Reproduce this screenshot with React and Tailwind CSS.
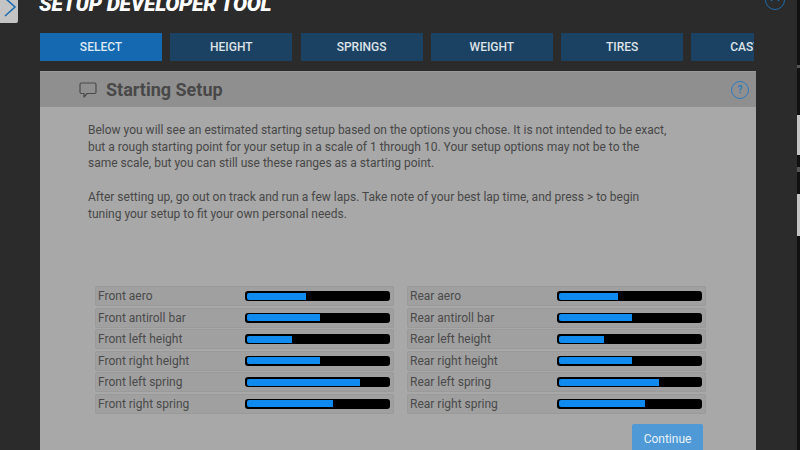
const tabs = ["SELECT", "HEIGHT", "SPRINGS", "WEIGHT", "TIRES", "CASTER"]

const frontRows = [
  ["Front aero", 42],
  ["Front antiroll bar", 52],
  ["Front left height", 32],
  ["Front right height", 52],
  ["Front left spring", 80],
  ["Front right spring", 61],
]

const rearRows = [
  ["Rear aero", 42],
  ["Rear antiroll bar", 52],
  ["Rear left height", 32],
  ["Rear right height", 52],
  ["Rear left spring", 71],
  ["Rear right spring", 61],
]

function SetupRow({ label, value }) {
  return (
    <div className="flex items-center h-[20px] shrink-0 border border-[#9a9a9a] bg-[#a0a0a0] rounded-[2px] pl-[2px] pr-[3px]">
      <span className="w-[147px] text-[12px] leading-none text-[#4a4a4a]">{label}</span>
      <div className="flex-1 h-[10px] bg-black rounded-[3px] p-[1.5px]">
        <div className="h-full bg-[#0f8aee] rounded-l-[2px]" style={{ width: `${value}%` }} />
      </div>
    </div>
  )
}

export default function App() {
  return (
    <div className="w-[800px] h-[450px] overflow-hidden bg-[#2b2b2b] font-['Roboto',sans-serif] flex">
      <div className="w-[797px] shrink-0 flex flex-col">
        <div className="h-[33px] shrink-0 flex items-start">
          <div className="w-[18px] h-[23px] bg-[#c4c4c4] rounded-br-[2px]">
            <svg width="18" height="23" viewBox="0 0 18 23" fill="none" stroke="#1b6cb0" strokeWidth="1.6">
              <path d="M5 -2 L15 7 L5 16" />
            </svg>
          </div>
          <h1 className="ml-[21px] -mt-[8px] text-[21px] leading-[24px] font-black italic tracking-[-0.25px] text-white">
            SETUP DEVELOPER TOOL
          </h1>
          <div className="ml-auto mr-[12px] -mt-[10px] w-[20px] h-[20px] rounded-full border-[1.5px] border-[#1f6cad] flex items-center justify-center">
            <svg width="10" height="10" viewBox="0 0 10 10" fill="none" stroke="#1f6cad" strokeWidth="1.2">
              <path d="M1 6 L5 2 L9 6" />
            </svg>
          </div>
        </div>

        <div className="ml-[40px] w-[714px] h-[28px] flex gap-[8.3px] overflow-hidden shrink-0">
          {tabs.map((tab, i) => (
            <div
              key={tab}
              className={
                i === 0
                  ? "w-[122px] shrink-0 flex items-center justify-center bg-[#1469b0] text-[12px] font-medium text-[#dceaf5]"
                  : "w-[122px] shrink-0 flex items-center justify-center bg-[#1c4263] text-[12px] font-medium text-[#dde3e8]"
              }
            >
              {tab}
            </div>
          ))}
        </div>

        <div className="ml-[40px] mt-[10px] w-[716px] flex-1 min-h-0 overflow-hidden bg-[#a8a8a8] flex flex-col">
          <div className="h-[36px] shrink-0 bg-[#8f8f8f] flex items-center pl-[39px] pr-[7px] border-t border-[#9a9a9a]">
            <svg width="18" height="16" viewBox="0 0 18 16" fill="none" stroke="#4b4b4b" strokeWidth="1.2" strokeLinejoin="round">
              <path d="M2.5 1 H15.5 A1.5 1.5 0 0 1 17 2.5 V10 A1.5 1.5 0 0 1 15.5 11.5 H8 L5 15 V11.5 H2.5 A1.5 1.5 0 0 1 1 10 V2.5 A1.5 1.5 0 0 1 2.5 1 Z" />
            </svg>
            <span className="ml-[9px] text-[18px] font-bold text-[#484848]">Starting Setup</span>
            <div className="ml-auto w-[18px] h-[18px] rounded-full border-[1.5px] border-[#2f7cc0] flex items-center justify-center text-[10px] font-bold text-[#2f7cc0]">
              ?
            </div>
          </div>

          <div className="pt-[15px] pl-[48px] pr-[40px] text-[12px] leading-[16.7px] text-[#474747] shrink-0">
            <p>
              Below you will see an estimated starting setup based on the options you chose. It is not intended to be exact,
              <br />
              but a rough starting point for your setup in a scale of 1 through 10. Your setup options may not be to the
              <br />
              same scale, but you can still use these ranges as a starting point.
            </p>
            <p className="mt-[16.7px]">
              After setting up, go out on track and run a few laps. Take note of your best lap time, and press &gt; to begin
              <br />
              tuning your setup to fit your own personal needs.
            </p>
          </div>

          <div className="mt-[64px] ml-[55px] w-[611px] flex gap-[13px] shrink-0">
            <div className="w-[299px] flex flex-col gap-[1.5px]">
              {frontRows.map(([label, value]) => (
                <SetupRow key={label} label={label} value={value} />
              ))}
            </div>
            <div className="w-[299px] flex flex-col gap-[1.5px]">
              {rearRows.map(([label, value]) => (
                <SetupRow key={label} label={label} value={value} />
              ))}
            </div>
          </div>

          <div className="mt-[10px] pr-[53px] flex justify-end shrink-0">
            <button className="w-[71px] h-[30px] bg-[#4f9ad6] rounded-[2px] text-[12px] text-[#e8f2fa]">Continue</button>
          </div>
        </div>
      </div>
      <div className="flex-1 bg-[#111111] flex flex-col">
        <div className="mt-[65px] h-[3px] bg-[#555555]" />
        <div className="mt-[47px] h-[40px] bg-[#c4c4c4]" />
        <div className="mt-[12px] h-[5px] bg-[#555555]" />
        <div className="mt-[22px] h-[42px] bg-[#c4c4c4]" />
      </div>
    </div>
  )
}
